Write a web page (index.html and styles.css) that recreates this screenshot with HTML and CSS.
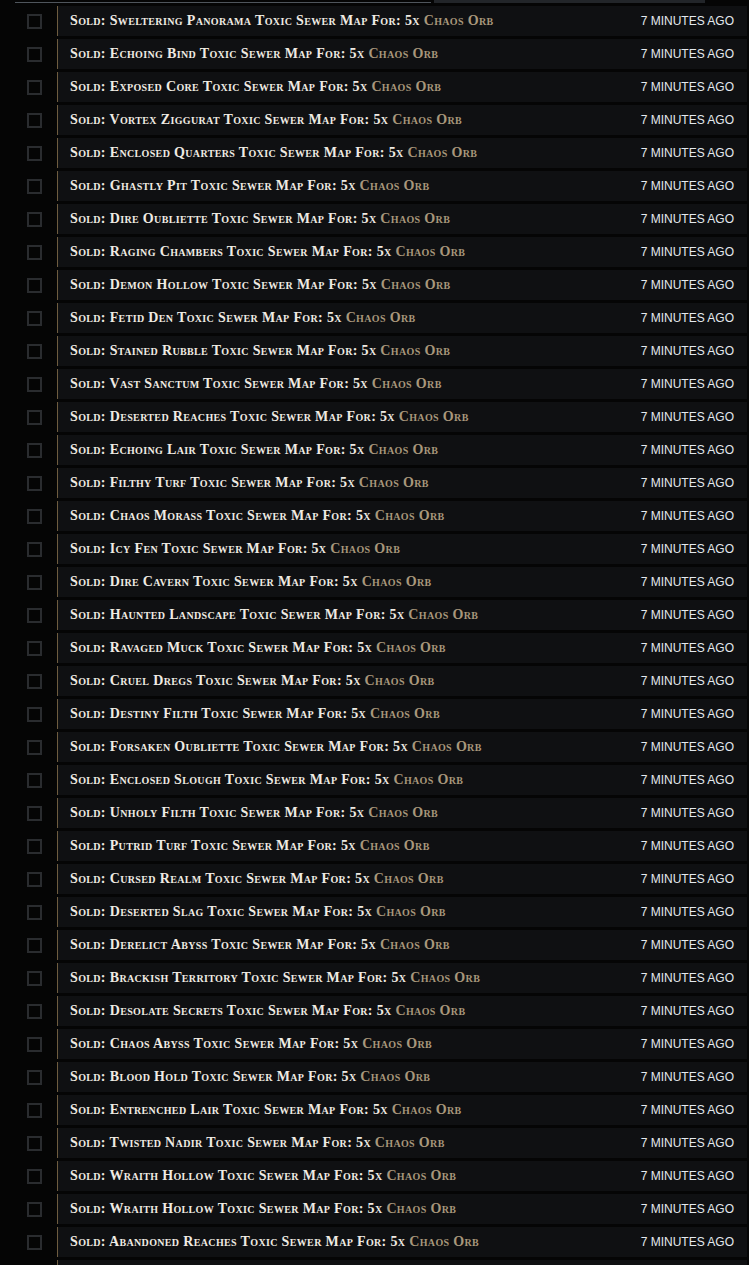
FILE: index.html
```html
<!DOCTYPE html>
<html lang="en">
<head>
<meta charset="utf-8">
<title>Sold items</title>
<link rel="stylesheet" href="styles.css">
</head>
<body>
<div class="topbar"><div class="topbar-line"></div><div class="topbar-track"></div></div>
<ul class="list">
<li class="item"><span class="check"></span><div class="row"><span class="msg">Sold: Sweltering Panorama Toxic Sewer Map For: 5x <span class="cur">Chaos Orb</span></span><span class="time">7 minutes ago</span></div></li>
<li class="item"><span class="check"></span><div class="row"><span class="msg">Sold: Echoing Bind Toxic Sewer Map For: 5x <span class="cur">Chaos Orb</span></span><span class="time">7 minutes ago</span></div></li>
<li class="item"><span class="check"></span><div class="row"><span class="msg">Sold: Exposed Core Toxic Sewer Map For: 5x <span class="cur">Chaos Orb</span></span><span class="time">7 minutes ago</span></div></li>
<li class="item"><span class="check"></span><div class="row"><span class="msg">Sold: Vortex Ziggurat Toxic Sewer Map For: 5x <span class="cur">Chaos Orb</span></span><span class="time">7 minutes ago</span></div></li>
<li class="item"><span class="check"></span><div class="row"><span class="msg">Sold: Enclosed Quarters Toxic Sewer Map For: 5x <span class="cur">Chaos Orb</span></span><span class="time">7 minutes ago</span></div></li>
<li class="item"><span class="check"></span><div class="row"><span class="msg">Sold: Ghastly Pit Toxic Sewer Map For: 5x <span class="cur">Chaos Orb</span></span><span class="time">7 minutes ago</span></div></li>
<li class="item"><span class="check"></span><div class="row"><span class="msg">Sold: Dire Oubliette Toxic Sewer Map For: 5x <span class="cur">Chaos Orb</span></span><span class="time">7 minutes ago</span></div></li>
<li class="item"><span class="check"></span><div class="row"><span class="msg">Sold: Raging Chambers Toxic Sewer Map For: 5x <span class="cur">Chaos Orb</span></span><span class="time">7 minutes ago</span></div></li>
<li class="item"><span class="check"></span><div class="row"><span class="msg">Sold: Demon Hollow Toxic Sewer Map For: 5x <span class="cur">Chaos Orb</span></span><span class="time">7 minutes ago</span></div></li>
<li class="item"><span class="check"></span><div class="row"><span class="msg">Sold: Fetid Den Toxic Sewer Map For: 5x <span class="cur">Chaos Orb</span></span><span class="time">7 minutes ago</span></div></li>
<li class="item"><span class="check"></span><div class="row"><span class="msg">Sold: Stained Rubble Toxic Sewer Map For: 5x <span class="cur">Chaos Orb</span></span><span class="time">7 minutes ago</span></div></li>
<li class="item"><span class="check"></span><div class="row"><span class="msg">Sold: Vast Sanctum Toxic Sewer Map For: 5x <span class="cur">Chaos Orb</span></span><span class="time">7 minutes ago</span></div></li>
<li class="item"><span class="check"></span><div class="row"><span class="msg">Sold: Deserted Reaches Toxic Sewer Map For: 5x <span class="cur">Chaos Orb</span></span><span class="time">7 minutes ago</span></div></li>
<li class="item"><span class="check"></span><div class="row"><span class="msg">Sold: Echoing Lair Toxic Sewer Map For: 5x <span class="cur">Chaos Orb</span></span><span class="time">7 minutes ago</span></div></li>
<li class="item"><span class="check"></span><div class="row"><span class="msg">Sold: Filthy Turf Toxic Sewer Map For: 5x <span class="cur">Chaos Orb</span></span><span class="time">7 minutes ago</span></div></li>
<li class="item"><span class="check"></span><div class="row"><span class="msg">Sold: Chaos Morass Toxic Sewer Map For: 5x <span class="cur">Chaos Orb</span></span><span class="time">7 minutes ago</span></div></li>
<li class="item"><span class="check"></span><div class="row"><span class="msg">Sold: Icy Fen Toxic Sewer Map For: 5x <span class="cur">Chaos Orb</span></span><span class="time">7 minutes ago</span></div></li>
<li class="item"><span class="check"></span><div class="row"><span class="msg">Sold: Dire Cavern Toxic Sewer Map For: 5x <span class="cur">Chaos Orb</span></span><span class="time">7 minutes ago</span></div></li>
<li class="item"><span class="check"></span><div class="row"><span class="msg">Sold: Haunted Landscape Toxic Sewer Map For: 5x <span class="cur">Chaos Orb</span></span><span class="time">7 minutes ago</span></div></li>
<li class="item"><span class="check"></span><div class="row"><span class="msg">Sold: Ravaged Muck Toxic Sewer Map For: 5x <span class="cur">Chaos Orb</span></span><span class="time">7 minutes ago</span></div></li>
<li class="item"><span class="check"></span><div class="row"><span class="msg">Sold: Cruel Dregs Toxic Sewer Map For: 5x <span class="cur">Chaos Orb</span></span><span class="time">7 minutes ago</span></div></li>
<li class="item"><span class="check"></span><div class="row"><span class="msg">Sold: Destiny Filth Toxic Sewer Map For: 5x <span class="cur">Chaos Orb</span></span><span class="time">7 minutes ago</span></div></li>
<li class="item"><span class="check"></span><div class="row"><span class="msg">Sold: Forsaken Oubliette Toxic Sewer Map For: 5x <span class="cur">Chaos Orb</span></span><span class="time">7 minutes ago</span></div></li>
<li class="item"><span class="check"></span><div class="row"><span class="msg">Sold: Enclosed Slough Toxic Sewer Map For: 5x <span class="cur">Chaos Orb</span></span><span class="time">7 minutes ago</span></div></li>
<li class="item"><span class="check"></span><div class="row"><span class="msg">Sold: Unholy Filth Toxic Sewer Map For: 5x <span class="cur">Chaos Orb</span></span><span class="time">7 minutes ago</span></div></li>
<li class="item"><span class="check"></span><div class="row"><span class="msg">Sold: Putrid Turf Toxic Sewer Map For: 5x <span class="cur">Chaos Orb</span></span><span class="time">7 minutes ago</span></div></li>
<li class="item"><span class="check"></span><div class="row"><span class="msg">Sold: Cursed Realm Toxic Sewer Map For: 5x <span class="cur">Chaos Orb</span></span><span class="time">7 minutes ago</span></div></li>
<li class="item"><span class="check"></span><div class="row"><span class="msg">Sold: Deserted Slag Toxic Sewer Map For: 5x <span class="cur">Chaos Orb</span></span><span class="time">7 minutes ago</span></div></li>
<li class="item"><span class="check"></span><div class="row"><span class="msg">Sold: Derelict Abyss Toxic Sewer Map For: 5x <span class="cur">Chaos Orb</span></span><span class="time">7 minutes ago</span></div></li>
<li class="item"><span class="check"></span><div class="row"><span class="msg">Sold: Brackish Territory Toxic Sewer Map For: 5x <span class="cur">Chaos Orb</span></span><span class="time">7 minutes ago</span></div></li>
<li class="item"><span class="check"></span><div class="row"><span class="msg">Sold: Desolate Secrets Toxic Sewer Map For: 5x <span class="cur">Chaos Orb</span></span><span class="time">7 minutes ago</span></div></li>
<li class="item"><span class="check"></span><div class="row"><span class="msg">Sold: Chaos Abyss Toxic Sewer Map For: 5x <span class="cur">Chaos Orb</span></span><span class="time">7 minutes ago</span></div></li>
<li class="item"><span class="check"></span><div class="row"><span class="msg">Sold: Blood Hold Toxic Sewer Map For: 5x <span class="cur">Chaos Orb</span></span><span class="time">7 minutes ago</span></div></li>
<li class="item"><span class="check"></span><div class="row"><span class="msg">Sold: Entrenched Lair Toxic Sewer Map For: 5x <span class="cur">Chaos Orb</span></span><span class="time">7 minutes ago</span></div></li>
<li class="item"><span class="check"></span><div class="row"><span class="msg">Sold: Twisted Nadir Toxic Sewer Map For: 5x <span class="cur">Chaos Orb</span></span><span class="time">7 minutes ago</span></div></li>
<li class="item"><span class="check"></span><div class="row"><span class="msg">Sold: Wraith Hollow Toxic Sewer Map For: 5x <span class="cur">Chaos Orb</span></span><span class="time">7 minutes ago</span></div></li>
<li class="item"><span class="check"></span><div class="row"><span class="msg">Sold: Wraith Hollow Toxic Sewer Map For: 5x <span class="cur">Chaos Orb</span></span><span class="time">7 minutes ago</span></div></li>
<li class="item"><span class="check"></span><div class="row"><span class="msg">Sold: Abandoned Reaches Toxic Sewer Map For: 5x <span class="cur">Chaos Orb</span></span><span class="time">7 minutes ago</span></div></li>
<li class="item"><span class="check"></span><div class="row"></div></li>
</ul>
</body>
</html>
```
FILE: styles.css
```css
html, body {
  margin: 0;
  padding: 0;
  background: #050505;
  height: 1265px;
  overflow: hidden;
}
body {
  font-family: "Liberation Serif", serif;
}
.topbar {
  display: flex;
  height: 3px;
  margin-bottom: 3px;
}
.topbar-line {
  margin-left: 15px;
  width: 416px;
  height: 1px;
  margin-top: 2px;
  background: #4f555c;
}
.topbar-track {
  margin-left: 3px;
  width: 271px;
  height: 3px;
  background: #222529;
}
.list {
  list-style: none;
  margin: 0;
  padding: 0 2px 0 27px;
  display: flex;
  flex-direction: column;
  gap: 3px;
}
.item {
  display: flex;
  align-items: center;
  gap: 15px;
  height: 30px;
}
.check {
  flex: none;
  width: 11px;
  height: 11px;
  border: 2px solid #2a2c2f;
  margin-top: 1px;
}
.row {
  flex: 1;
  height: 30px;
  box-sizing: border-box;
  border-left: 1px solid #6e5c40;
  background: #0f1012;
  display: flex;
  align-items: center;
  justify-content: space-between;
  padding: 0 13px 0 12px;
}
.msg {
  font-family: "Liberation Serif", serif;
  font-variant: small-caps;
  font-weight: 700;
  font-size: 14px;
  letter-spacing: 0.35px;
  color: #efebe3;
  white-space: nowrap;
}
.cur {
  color: #a8977b;
}
.time {
  font-family: "Liberation Sans", sans-serif;
  text-transform: uppercase;
  font-size: 12px;
  color: #e4e9ee;
  white-space: nowrap;
}
```
